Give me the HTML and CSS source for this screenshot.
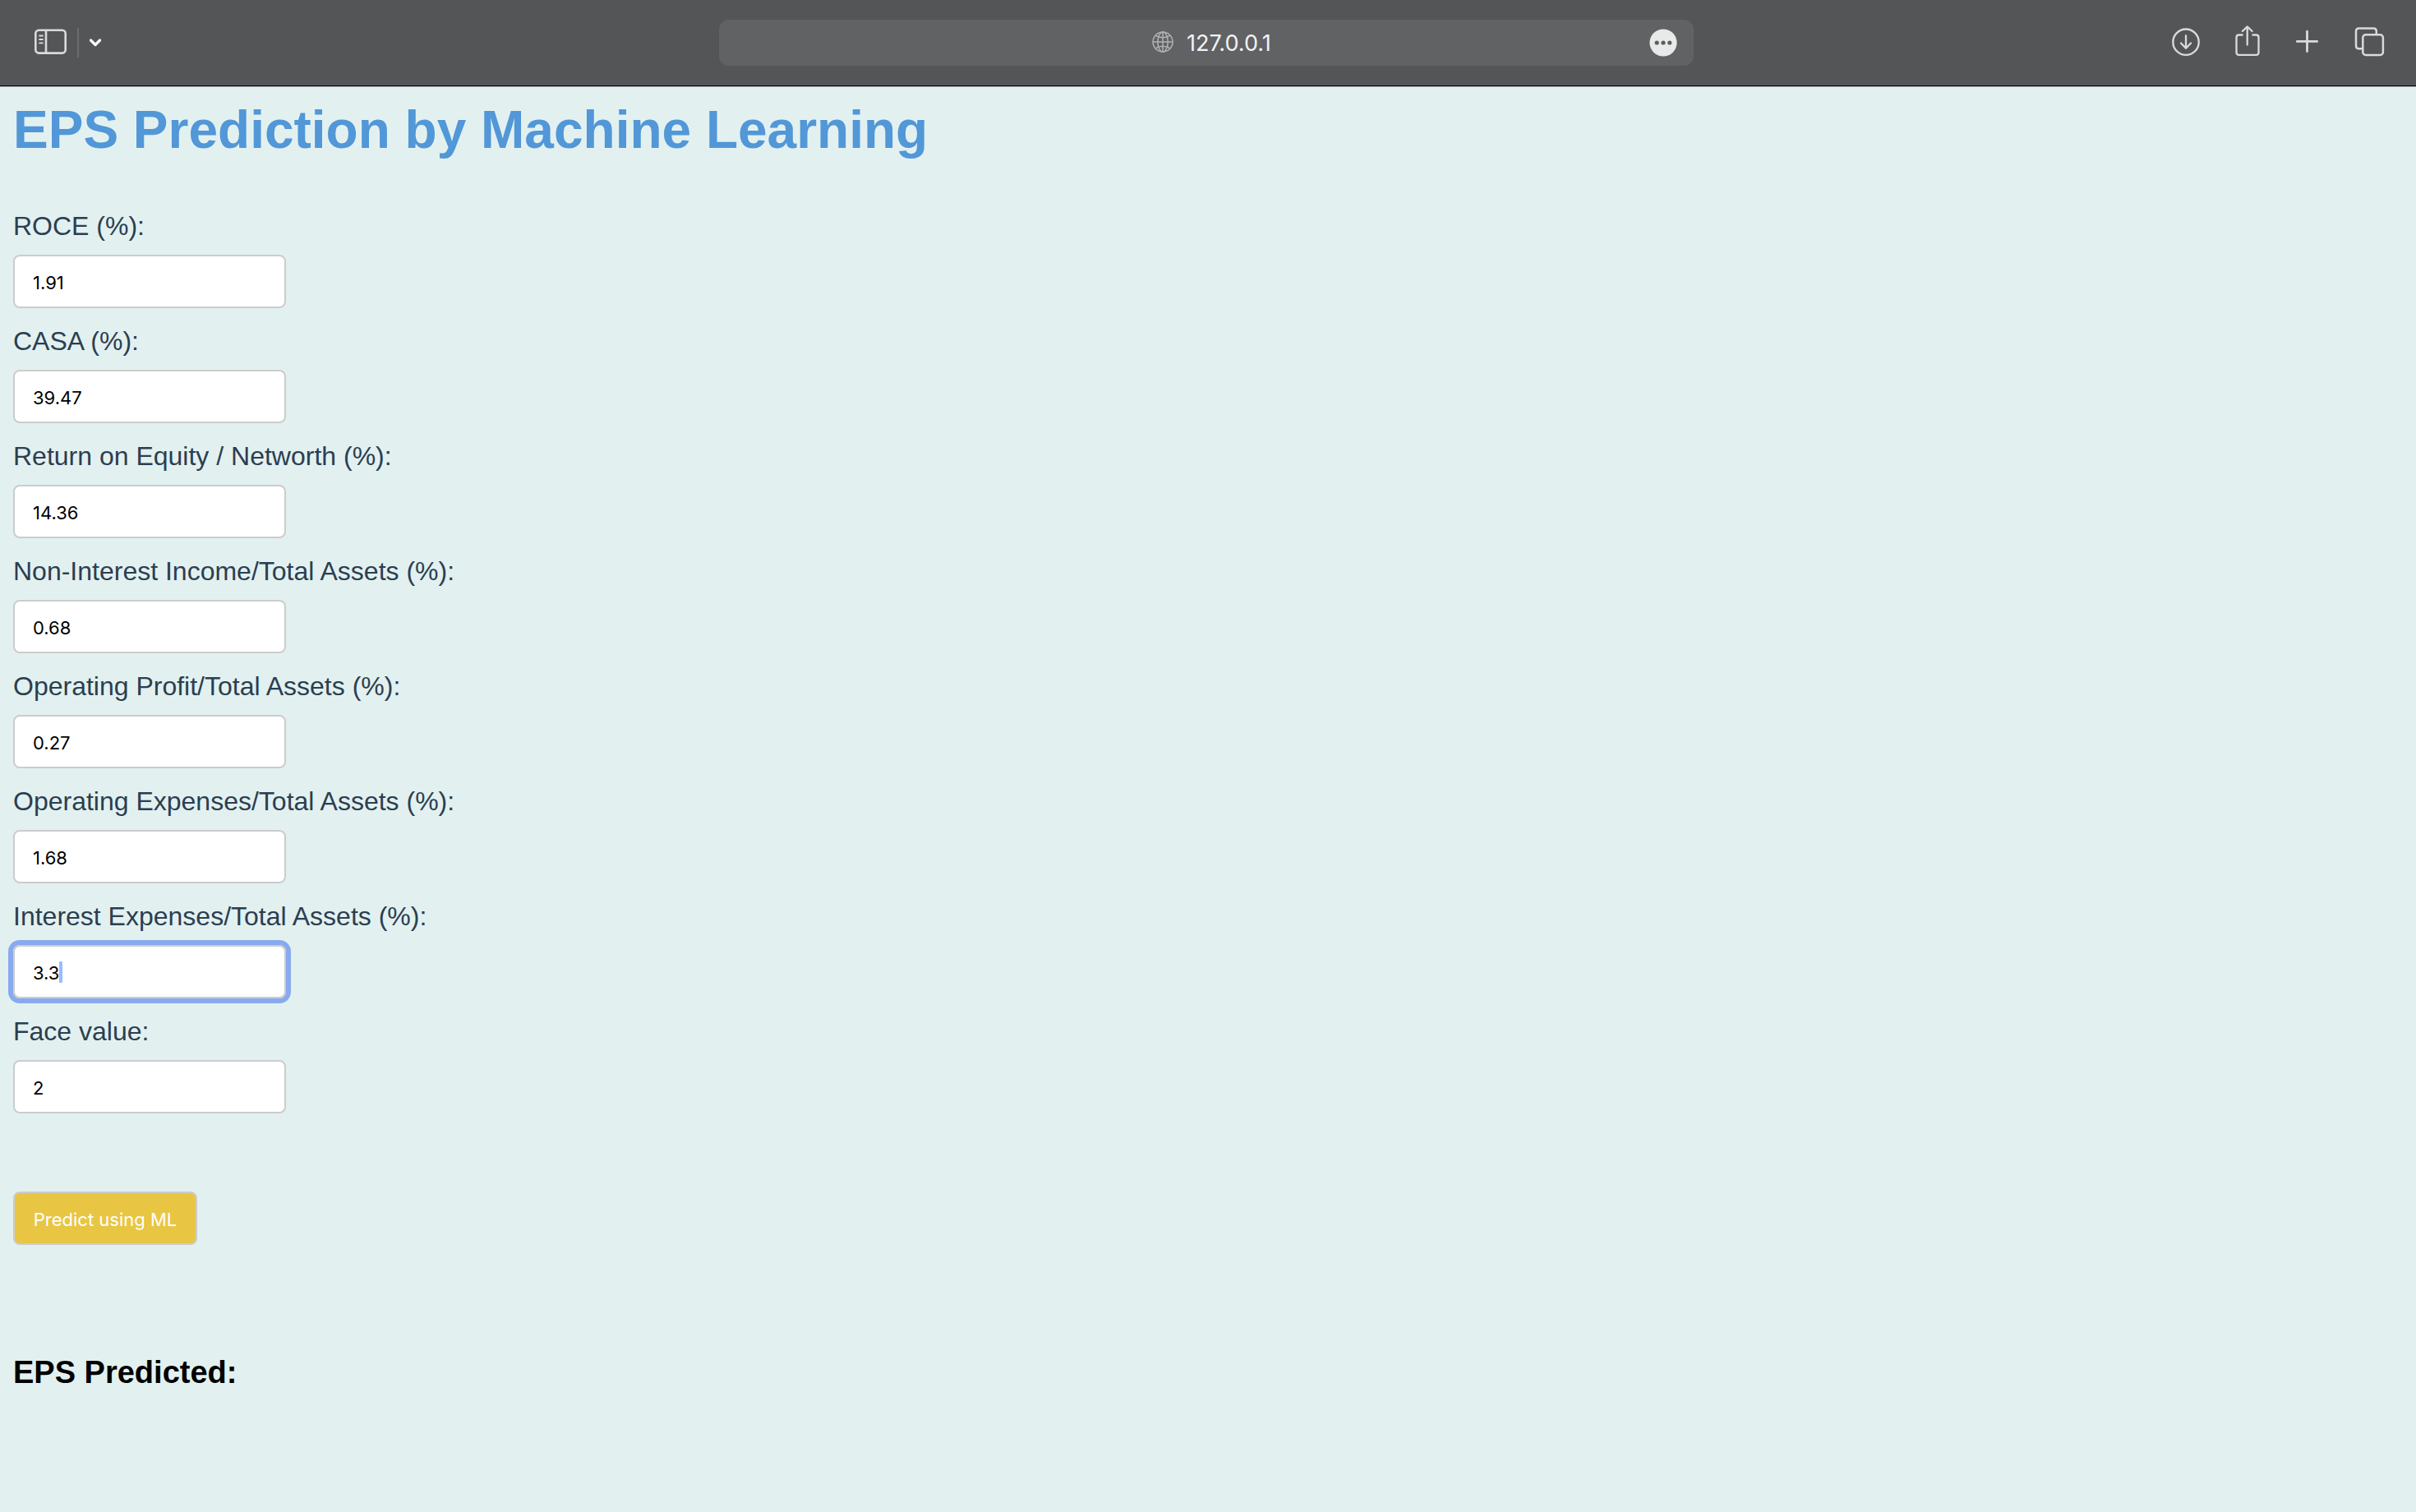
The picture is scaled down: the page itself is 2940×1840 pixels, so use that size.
FILE: index.html
```html
<!DOCTYPE html>
<html lang="en">
<head>
  <meta charset="utf-8">
  <title>EPS Prediction</title>
  <link rel="stylesheet" href="styles.css">
</head>
<body>
  <header class="toolbar">
    <div class="tools-left">
      <button class="icon-button" type="button" aria-label="Show sidebar">
        <svg width="44" height="40" viewBox="0 0 44 40" fill="none" stroke="currentColor" stroke-width="2.6" stroke-linecap="round">
          <rect x="3.3" y="4.8" width="36.4" height="27.8" rx="4"/>
          <path d="M16 5v27"/>
          <path d="M8 11.5h4M8 16h4M8 20.3h4" stroke-width="1.8"/>
        </svg>
      </button>
      <span class="divider"></span>
      <button class="icon-button chevron" type="button" aria-label="Tab groups">
        <svg width="16" height="40" viewBox="0 0 16 40" fill="none" stroke="currentColor" stroke-width="3.2" stroke-linecap="round" stroke-linejoin="round">
          <path d="M2.500 17l5.500 5.500 5.500-5.500"/>
        </svg>
      </button>
    </div>
    <div class="address">
      <div class="location">
        <svg class="globe" width="26" height="26" viewBox="0 0 26 26" fill="none" stroke="currentColor" stroke-width="1.5">
          <circle cx="13" cy="12" r="12"/>
          <ellipse cx="13" cy="12" rx="6.200" ry="12"/>
          <path d="M13 0v24M1 12h24M4 4.200c5 3.400 13 3.400 18 0M4 19.800c5-3.400 13-3.400 18 0"/>
        </svg>
        <input class="url" type="text" value="127.0.0.1" aria-label="Address">
      </div>
      <button class="icon-button more" type="button" aria-label="Page menu">
        <svg width="34" height="34" viewBox="0 0 34 34">
          <circle cx="17" cy="17" r="16.600" fill="#e8e9e9"/>
          <g fill="#5d5e60"><circle cx="9.200" cy="17" r="2.600"/><circle cx="17" cy="17" r="2.600"/><circle cx="24.800" cy="17" r="2.600"/></g>
        </svg>
      </button>
    </div>
    <div class="tools-right">
      <button class="icon-button" type="button" aria-label="Downloads">
        <svg width="40" height="40" viewBox="0 0 40 40" fill="none" stroke="currentColor" stroke-width="2.300" stroke-linecap="round" stroke-linejoin="round">
          <circle cx="20" cy="19.200" r="15.700"/>
          <path d="M20 11.500v15M14 20.500l6 6.200 6-6.200"/>
        </svg>
      </button>
      <button class="icon-button" type="button" aria-label="Share">
        <svg width="40" height="40" viewBox="0 0 40 40" overflow="visible" fill="none" stroke="currentColor" stroke-width="2.300" stroke-linecap="round" stroke-linejoin="round">
          <path d="M15.500 10.500h-5q-3 0-3 3v18.300q0 3 3 3h21q3 0 3-3V13.500q0-3-3-3h-5" stroke-linecap="butt"/>
          <path d="M20.700 22.500V0.700M14.800 6l5.900-5.600L26.600 6"/>
        </svg>
      </button>
      <button class="icon-button" type="button" aria-label="New tab">
        <svg width="40" height="40" viewBox="0 0 40 40" fill="none" stroke="currentColor" stroke-width="2.800" stroke-linecap="round">
          <path d="M19.500 6.200v24.300M7.300 18.400h24.300"/>
        </svg>
      </button>
      <button class="icon-button" type="button" aria-label="Tab overview">
        <svg width="40" height="40" viewBox="0 0 40 40" fill="none" stroke="currentColor" stroke-width="2.500">
          <rect x="13.300" y="10.300" width="24.600" height="24.600" rx="3.500"/>
          <path d="M12.500 27.300h-4q-3.500 0-3.500-3.500V6q0-3.500 3.500-3.500h17.800q3.500 0 3.500 3.500v4"/>
        </svg>
      </button>
    </div>
  </header>

  <main class="page">
    <h1 class="title">EPS Prediction by Machine Learning</h1>
    <form class="form">
      <div class="field">
        <label for="roce">ROCE (%):</label>
        <input id="roce" type="text" value="1.91">
      </div>
      <div class="field">
        <label for="casa">CASA (%):</label>
        <input id="casa" type="text" value="39.47">
      </div>
      <div class="field">
        <label for="equity">Return on Equity / Networth (%):</label>
        <input id="equity" type="text" value="14.36">
      </div>
      <div class="field">
        <label for="income">Non-Interest Income/Total Assets (%):</label>
        <input id="income" type="text" value="0.68">
      </div>
      <div class="field">
        <label for="profit">Operating Profit/Total Assets (%):</label>
        <input id="profit" type="text" value="0.27">
      </div>
      <div class="field">
        <label for="opex">Operating Expenses/Total Assets (%):</label>
        <input id="opex" type="text" value="1.68">
      </div>
      <div class="field">
        <label for="intex">Interest Expenses/Total Assets (%):</label>
        <div class="active">
          <input id="intex" type="text" value="3.3">
          <span class="caret"></span>
        </div>
      </div>
      <div class="field">
        <label for="face">Face value:</label>
        <input id="face" type="text" value="2">
      </div>
      <button class="predict" type="button">Predict using ML</button>
    </form>
    <h2 class="result">EPS Predicted:</h2>
  </main>
</body>
</html>
```
FILE: styles.css
```css
* {
  box-sizing: border-box;
}

body {
  margin: 0;
  min-height: 100vh;
  background: #e2f1f0;
  font-family: "Liberation Sans", Arial, sans-serif;
}

button,
input {
  font-family: Inter, sans-serif;
}

/* Browser toolbar */
.toolbar {
  display: grid;
  grid-template-columns: 1fr minmax(0, 1186px) 1fr;
  align-items: center;
  height: 105px;
  padding: 0 38px 0 34px;
  background: #545557;
  border-bottom: 1px solid #000;
  box-shadow: 0 1px #a9b3b2;
}

.tools-left,
.tools-right {
  display: flex;
  align-items: center;
  color: #d9dadb;
}

.tools-left {
  gap: 10px;
  padding-left: 6px;
}

.tools-right {
  justify-content: flex-end;
  gap: 34px;
}

.icon-button {
  display: flex;
  padding: 0;
  border: 0;
  background: none;
  color: inherit;
}

.divider {
  width: 2px;
  height: 36px;
  background: #6b6c6e;
}

.chevron {
  padding-left: 2px;
  color: #fff;
}

.address {
  display: flex;
  align-items: center;
  height: 56px;
  padding: 0 20px 0 66px;
  border-radius: 12px;
  background: #616264;
}

.location {
  display: flex;
  flex: 1;
  align-items: center;
  justify-content: center;
  gap: 16px;
}

.globe {
  overflow: visible;
  color: #b0b1b2;
}

.url {
  width: 102px;
  padding: 0;
  border: 0;
  background: none;
  color: #f2f2f2;
  font-size: 27px;
}

/* Prediction form */
.page {
  padding: 17px 16px 16px;
}

.title {
  margin: 0 0 61px;
  color: #5297d7;
  font-size: 64px;
  line-height: 72px;
}

.form {
  display: flex;
  flex-direction: column;
  align-items: flex-start;
  gap: 20px;
}

.field {
  display: flex;
  flex-direction: column;
  align-items: flex-start;
  gap: 15px;
}

.field label {
  color: #2c3e50;
  font-size: 32px;
  line-height: 40px;
}

.field input,
.predict {
  height: 65px;
  padding: 2px 22px 0;
  border: 2px solid #ccc;
  border-radius: 8px;
  font-size: 22px;
}

.field input {
  display: block;
  width: 332px;
  background: #fff;
  color: #000;
}

.active {
  position: relative;
  border-radius: 8px;
  box-shadow: 0 0 0 6px #88aaee;
}

.caret {
  position: absolute;
  top: 20px;
  left: 56px;
  width: 4px;
  height: 26px;
  border-radius: 1px;
  background: #9abbff;
}

.predict {
  min-width: 224px;
  margin-top: 75px;
  background: #e8c644;
  color: #fff;
}

.result {
  margin: 131px 0 0;
  color: #000;
  font-size: 38px;
  line-height: 48px;
}
```
